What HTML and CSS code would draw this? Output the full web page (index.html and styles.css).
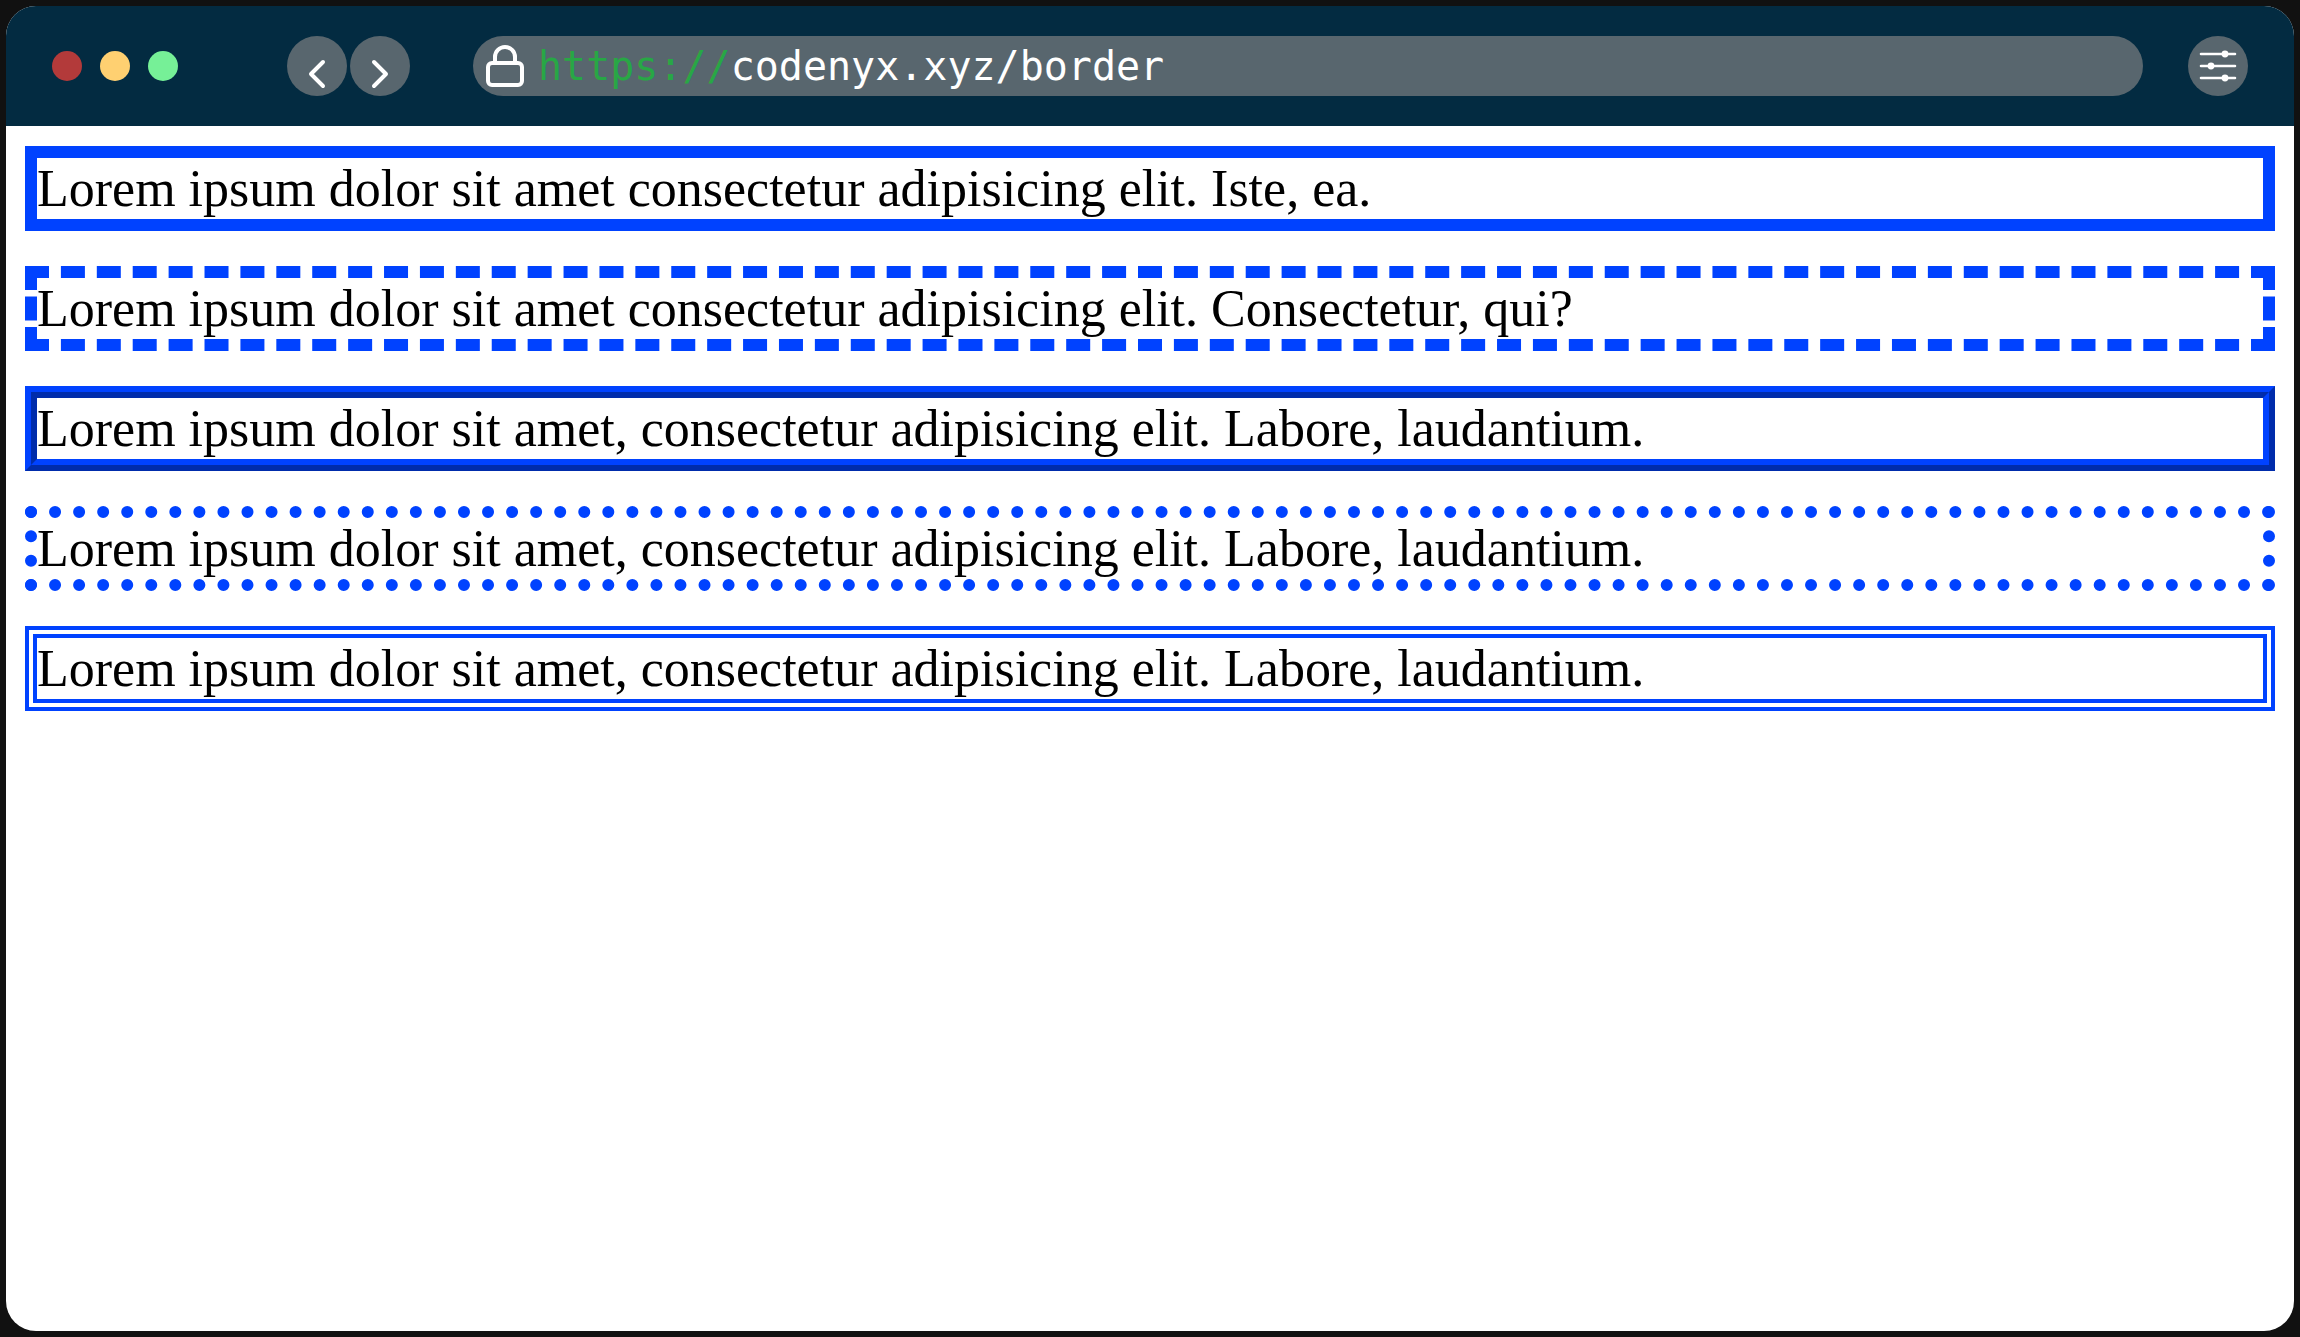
FILE: index.html
```html
<!DOCTYPE html>
<html lang="en">
<head>
<meta charset="utf-8">
<title>codenyx.xyz/border</title>
<link rel="stylesheet" href="styles.css">
</head>
<body>
<div class="window">
  <header class="toolbar">
    <div class="lights">
      <button class="light light-close" aria-label="Close"></button>
      <button class="light light-minimize" aria-label="Minimize"></button>
      <button class="light light-expand" aria-label="Expand"></button>
    </div>
    <nav class="history">
      <button class="round" aria-label="Back">
        <svg viewBox="0 0 60 60" class="icon"><path d="M36 26 24 38 36 50" stroke-width="4"/></svg>
      </button>
      <button class="round" aria-label="Forward">
        <svg viewBox="0 0 60 60" class="icon"><path d="M24 26 36 38 24 50" stroke-width="4"/></svg>
      </button>
    </nav>
    <label class="address">
      <svg class="lock" viewBox="0 0 38 42" aria-hidden="true"><rect x="2" y="18" width="34" height="22" rx="4"/><path d="M9 18v-6a10 10 0 0 1 20 0v6"/></svg>
      <span class="scheme">https://</span>
      <input class="url" type="text" value="codenyx.xyz/border" aria-label="Address" spellcheck="false">
    </label>
    <button class="round" aria-label="Settings">
      <svg viewBox="0 0 60 60" class="icon">
        <path d="M13 18H47M13 30H47M13 42H47" stroke-width="2.6"/>
        <g class="knobs"><circle cx="37" cy="18" r="3.4"/><circle cx="23" cy="30" r="3.4"/><circle cx="37" cy="42" r="3.4"/></g>
      </svg>
    </button>
  </header>
  <main class="page">
    <p class="sample solid">Lorem ipsum dolor sit amet consectetur adipisicing elit. Iste, ea.</p>
    <p class="sample dashed">Lorem ipsum dolor sit amet consectetur adipisicing elit. Consectetur, qui?</p>
    <p class="sample ridge">Lorem ipsum dolor sit amet, consectetur adipisicing elit. Labore, laudantium.</p>
    <p class="sample dotted">Lorem ipsum dolor sit amet, consectetur adipisicing elit. Labore, laudantium.</p>
    <p class="sample double">Lorem ipsum dolor sit amet, consectetur adipisicing elit. Labore, laudantium.</p>
  </main>
</div>
</body>
</html>
```
FILE: styles.css
```css
* {
  box-sizing: border-box;
}

body {
  margin: 0;
  padding: 6px;
  min-height: 100vh;
  display: flex;
  background: #111;
}

.window {
  flex: 1;
  min-width: 0;
  display: flex;
  flex-direction: column;
  overflow: hidden;
  border-radius: 30px;
  background: #fff;
}

.toolbar {
  display: flex;
  align-items: center;
  padding: 30px 46px;
  background: #032b41;
}

button {
  flex: none;
  padding: 0;
  border: 0;
  border-radius: 50%;
}

.lights {
  display: flex;
  gap: 18px;
}

.light {
  width: 30px;
  height: 30px;
}

.light-close { background: #b33a3a; }
.light-minimize { background: #ffd071; }
.light-expand { background: #76f097; }

.history {
  display: flex;
  gap: 3px;
  margin-left: 109px;
}

.round {
  width: 60px;
  height: 60px;
  background: #58666e;
}

.icon,
.lock {
  display: block;
  fill: none;
  stroke: #fff;
  stroke-linecap: round;
  stroke-linejoin: round;
}

.knobs {
  fill: #fff;
  stroke: none;
}

.address {
  flex: 1;
  min-width: 0;
  height: 60px;
  display: flex;
  align-items: center;
  margin: 0 45px 0 63px;
  padding: 0 30px 0 13px;
  border-radius: 30px;
  background: #58666e;
  font: 40px/60px "DejaVu Sans Mono", monospace;
}

.lock {
  flex: none;
  width: 38px;
  height: 42px;
  margin-right: 14px;
  stroke-width: 4;
}

.scheme {
  color: #28a745;
}

.url {
  flex: 1;
  min-width: 0;
  height: 60px;
  padding: 0;
  border: 0;
  outline: 0;
  background: none;
  color: #fff;
  font: inherit;
}

.page {
  display: flex;
  flex-direction: column;
  gap: 35px;
  padding: 20px 19px;
}

.sample {
  margin: 0;
  border: 12px solid #0042ff;
  color: #000;
  font: 52px/61px "Liberation Serif", "Times New Roman", serif;
}

.dashed { border-style: dashed; }
.ridge { border-style: ridge; }
.dotted { border-style: dotted; }
.double { border-style: double; }
```
